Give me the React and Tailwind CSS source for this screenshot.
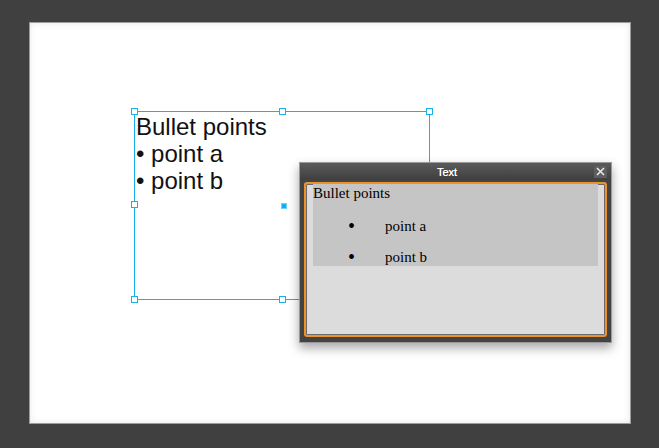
import React from 'react';

const sans = { fontFamily: '"Liberation Sans", Arial, sans-serif' };

// small square handle on the selection frame
function Handle({ className }) {
  return <div className={`absolute w-[7px] h-[7px] bg-white border border-[#16b2ec] ${className}`} />;
}

function SelectionBox() {
  return (
    <div className="absolute left-[104px] top-[88px] w-[296px] h-[189px] border border-[#16b2ec]">
      <div className="pt-[1px] pl-[1px] text-[24px] leading-[27px] text-[#111]" style={sans}>
        <div>Bullet points</div>
        <div>• point a</div>
        <div>• point b</div>
      </div>
      <Handle className="left-[-4px] top-[-4px]" />
      <Handle className="left-[144px] top-[-4px]" />
      <Handle className="right-[-4px] top-[-4px]" />
      <Handle className="left-[-4px] top-[89px]" />
      <Handle className="left-[-4px] top-[184px]" />
      <Handle className="left-[144px] top-[184px]" />
      <div className="absolute left-[146px] top-[91px] w-[6px] h-[6px] bg-[#0fb0f2] border border-[#6fd0f7]" />
    </div>
  );
}

function TextPanel() {
  return (
    <div className="absolute left-[269px] top-[139px] w-[313px] h-[181px] border border-[#9a9a9a] bg-[#434343] shadow-[0_5px_10px_rgba(0,0,0,0.35)] flex flex-col">
      <div className="h-[17px] flex items-center bg-gradient-to-b from-[#5b5b5b] to-[#3f3f3f]">
        <div className="flex-1 text-center text-[11px] text-white pt-[1px] [text-shadow:0_0_0.4px_#fff]" style={sans}>Text</div>
        <div className="w-[13px] h-[12px] mr-[4px] bg-[#5e5e5e] flex items-center justify-center">
          <svg width="9" height="9" viewBox="0 0 9 9">
            <path d="M1 1 L8 8 M8 1 L1 8" stroke="#e8e8e8" strokeWidth="1.6" />
          </svg>
        </div>
      </div>
      <div className="flex-1 pt-[2px] pl-[4px] pr-[4px] pb-[5px]">
        <div className="h-full rounded-[3px] border-2 border-[#f0922c] bg-[#dcdcdc] shadow-[inset_0_0_0_1px_#6a6a6a]">
          <div className="mx-[7px] bg-[#c5c5c5] text-[15px] leading-[18px] text-black" style={{ fontFamily: '"Liberation Serif", "Times New Roman", serif' }}>
            <div>Bullet points</div>
            <ul className="mt-[15px] flex flex-col gap-[13px]">
              <li className="flex">
                <span className="w-[72px] pl-[35px] text-[20px]">•</span>
                <span>point a</span>
              </li>
              <li className="flex">
                <span className="w-[72px] pl-[35px] text-[20px]">•</span>
                <span>point b</span>
              </li>
            </ul>
          </div>
        </div>
      </div>
    </div>
  );
}

export default function App() {
  return (
    <div className="w-[659px] h-[448px] bg-[#404040] pl-[29px] pt-[22px] overflow-hidden">
      <div className="relative w-[602px] h-[402px] bg-white border border-[#9c9c9c] shadow-[inset_0_0_6px_rgba(0,0,0,0.10)]">
        <SelectionBox />
        <TextPanel />
      </div>
    </div>
  );
}
